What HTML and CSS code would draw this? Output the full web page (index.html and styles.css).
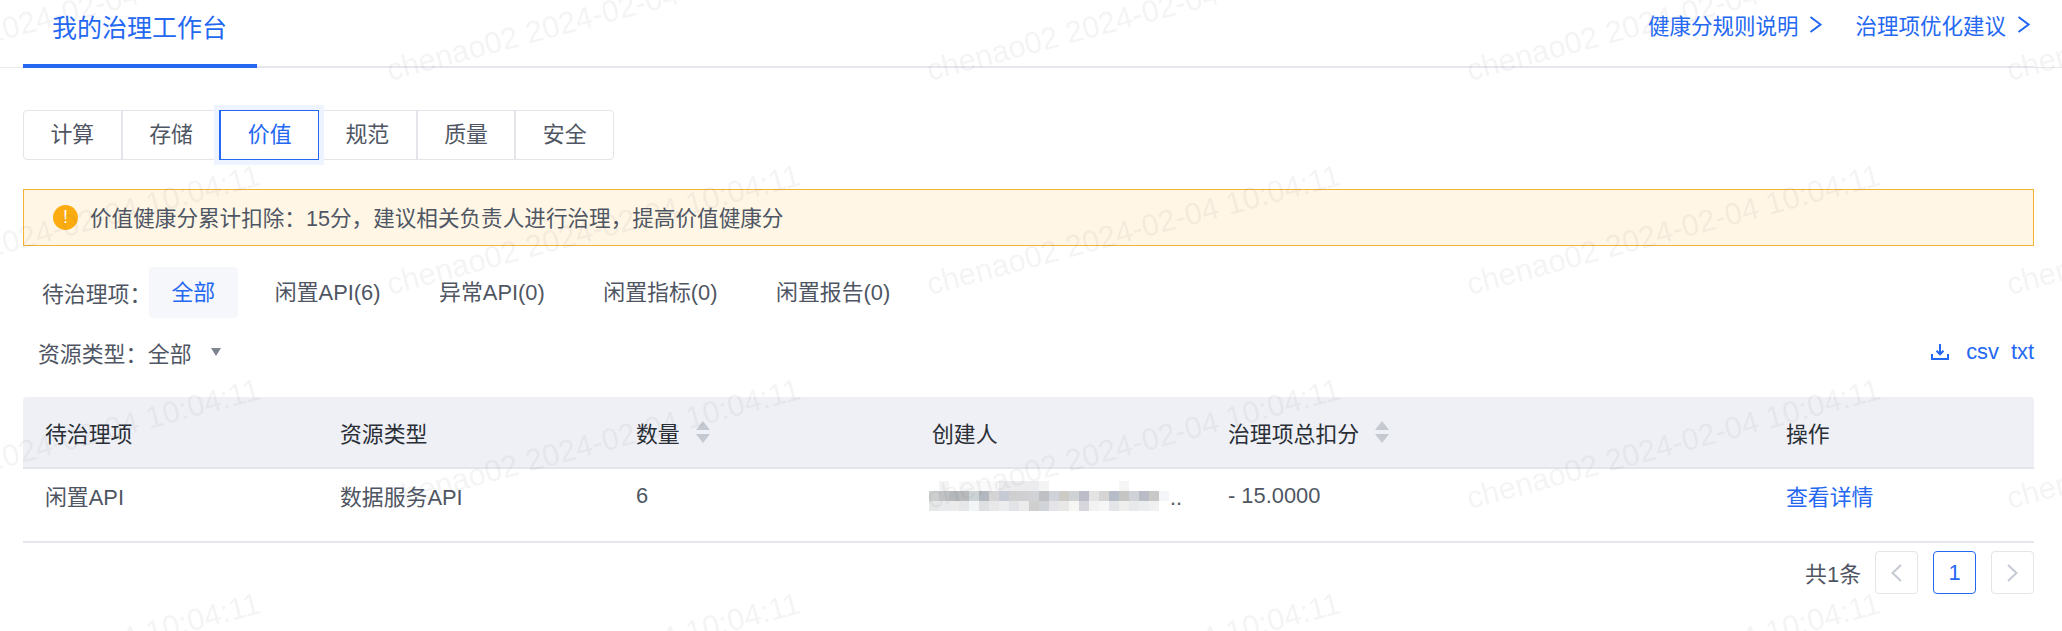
FILE: index.html
```html
<!DOCTYPE html>
<html lang="zh-CN">
<head>
  <meta charset="UTF-8">
  <title>我的治理工作台</title>
  <link rel="stylesheet" href="styles.css">
</head>
<body>
  <div class="page">
    <div class="top-bar">
      <div class="top-inner">
        <div class="title-tab">我的治理工作台</div>
        <div class="top-links">
          <a class="top-link">健康分规则说明
            <svg class="chevron" viewBox="0 0 13 17"><path d="M1.5 1 L11.5 8.5 L1.5 16"/></svg>
          </a>
          <a class="top-link">治理项优化建议
            <svg class="chevron" viewBox="0 0 13 17"><path d="M1.5 1 L11.5 8.5 L1.5 16"/></svg>
          </a>
        </div>
      </div>
    </div>

    <div class="content">
      <div class="segments">
        <div class="segment">计算</div>
        <div class="segment">存储</div>
        <div class="segment active">价值</div>
        <div class="segment">规范</div>
        <div class="segment">质量</div>
        <div class="segment">安全</div>
      </div>

      <div class="alert">
        <span class="alert-icon">!</span>
        <span class="alert-text">价值健康分累计扣除：15分，建议相关负责人进行治理，提高价值健康分</span>
      </div>

      <div class="filter-row">
        <span class="filter-label">待治理项：</span>
        <span class="filter-item active">全部</span>
        <span class="filter-item">闲置API(6)</span>
        <span class="filter-item">异常API(0)</span>
        <span class="filter-item">闲置指标(0)</span>
        <span class="filter-item">闲置报告(0)</span>
      </div>

      <div class="type-row">
        <div class="type-select">
          <span>资源类型：</span>
          <span class="type-value">全部</span>
          <span class="caret"></span>
        </div>
        <div class="downloads">
          <svg class="download-icon" viewBox="0 0 18 16"><path d="M9 0 V10 M5.5 6.8 L9 10.3 L12.5 6.8 M1 10 V15 H17 V10"/></svg>
          <a>csv</a>
          <a>txt</a>
        </div>
      </div>

      <div class="table">
        <div class="tr th">
          <div class="td c1">待治理项</div>
          <div class="td c2">资源类型</div>
          <div class="td c3">数量<span class="sorter"><i class="up"></i><i class="down"></i></span></div>
          <div class="td c4">创建人</div>
          <div class="td c5">治理项总扣分<span class="sorter"><i class="up"></i><i class="down"></i></span></div>
          <div class="td c6">操作</div>
        </div>
        <div class="tr body-row">
          <div class="td c1">闲置API</div>
          <div class="td c2">数据服务API</div>
          <div class="td c3">6</div>
          <div class="td c4"><span class="mosaic"></span><span class="dots">..</span></div>
          <div class="td c5">- 15.0000</div>
          <div class="td c6"><a>查看详情</a></div>
        </div>
      </div>

      <div class="pager">
        <span class="total">共1条</span>
        <span class="page-btn"><svg viewBox="0 0 11 18"><path d="M10 1 L1.5 9 L10 17"/></svg></span>
        <span class="page-btn current">1</span>
        <span class="page-btn"><svg viewBox="0 0 11 18"><path d="M1 1 L9.5 9 L1 17"/></svg></span>
      </div>
    </div>

    <svg class="watermark" width="2062" height="631">
      <defs>
        <pattern id="wm" width="540" height="214" patternUnits="userSpaceOnUse" patternTransform="translate(-160 -99)">
          <text x="10" y="180" transform="rotate(-15 10 180)">chenao02 2024-02-04 10:04:11</text>
        </pattern>
      </defs>
      <rect width="2062" height="631" fill="url(#wm)"/>
    </svg>
  </div>
</body>
</html>
```

FILE: styles.css
```css
* {
  box-sizing: border-box;
}

html, body {
  margin: 0;
  padding: 0;
  height: 100%;
  overflow: hidden;
  background: #fff;
}

body {
  font-family: "Liberation Sans", "Noto Sans CJK SC", sans-serif;
  font-size: 21.875px;
  color: #4f5663;
}

a {
  color: #2468f2;
}

.page {
  position: relative;
  width: 2062px;
  height: 631px;
}

/* top tab bar */
.top-bar {
  height: 68px;
  border-bottom: 1px solid #e8e9ee;
  padding: 0 28px 0 23px;
}

.top-inner {
  height: 68px;
  display: flex;
  justify-content: space-between;
  border-bottom: 2px solid #e6e7ee;
}

.title-tab {
  width: 234px;
  height: 68px;
  padding: 10px 0 0 29px;
  font-size: 25px;
  line-height: 36px;
  color: #2468f2;
  border-bottom: 4px solid #2468f2;
}

.top-links {
  display: flex;
  gap: 33px;
  padding: 7px 4px 0 0;
  font-size: 21.5px;
}

.top-link {
  display: flex;
  gap: 11px;
  align-items: center;
  height: 34px;
}

.chevron {
  width: 13px;
  height: 17px;
}

.chevron path {
  fill: none;
  stroke: #2468f2;
  stroke-width: 2;
}

.content {
  padding: 42px 28px 0 23px;
}

/* segmented buttons */
.segments {
  display: flex;
  width: 591px;
  height: 50px;
  border: 1px solid #e3e5ea;
  border-radius: 4px;
}

.segment {
  flex: 1;
  text-align: center;
  line-height: 48px;
  border-left: 2px solid #e3e5ea;
}

.segment:first-child {
  border-left: 0;
}

.segment.active {
  color: #2468f2;
  border: 1px solid #2468f2;
  border-left-width: 2px;
  margin: -1px 0;
  line-height: 48px;
  box-shadow: 0 0 0 5px #edf3ff;
  background: #fff;
  position: relative;
}

.segment.active + .segment {
  border-left: 0;
}

/* warning bar */
.alert {
  height: 57px;
  margin-top: 29px;
  display: flex;
  align-items: center;
  gap: 12px;
  padding-left: 29px;
  background: #fff6e6;
  border: 1px solid #f5b335;
}

.alert-icon {
  width: 25px;
  height: 25px;
  border-radius: 50%;
  background: #fdac0f;
  color: #fff;
  font-size: 18px;
  line-height: 25px;
  text-align: center;
}

.alert-text {
  font-size: 21.6px;
  padding-bottom: 3px;
}

/* filters */
.filter-row {
  display: flex;
  align-items: center;
  height: 51px;
  margin-top: 21px;
  padding-left: 19px;
}

.filter-label {
  width: 107px;
  white-space: nowrap;
}

.filter-item {
  height: 51px;
  line-height: 51px;
  padding: 0 22.5px;
  margin-right: 13.6px;
  border-radius: 4px;
}

.filter-item.active {
  color: #2468f2;
  background: #f6f7fa;
  margin-right: 14.6px;
}

.type-row {
  display: flex;
  justify-content: space-between;
  align-items: center;
  height: 36px;
  margin-top: 16px;
}

.type-select {
  display: flex;
  align-items: center;
  padding-left: 15px;
}

.type-value {
  margin-left: 0.5px;
}

.caret {
  width: 0;
  height: 0;
  margin-left: 19px;
  border-left: 5px solid transparent;
  border-right: 5px solid transparent;
  border-top: 8px solid #7d8490;
}

.downloads {
  display: flex;
  align-items: center;
  gap: 12px;
}

.download-icon {
  width: 18px;
  height: 16px;
  margin-right: 5px;
}

.download-icon path {
  fill: none;
  stroke: #2468f2;
  stroke-width: 2;
}

/* table */
.table {
  margin-top: 27px;
  border-bottom: 2px solid #e6e7ec;
}

.tr {
  display: flex;
  height: 72px;
  align-items: center;
}

.th {
  height: 72px;
  background: #eef0f5;
  color: #2a2e36;
  border-bottom: 2px solid #e3e5ea;
  border-radius: 4px 4px 0 0;
}

.body-row {
  padding-bottom: 19px;
}

.td {
  padding-left: 22px;
  display: flex;
  align-items: center;
}

.c1 { width: 295px; }
.c2, .c3, .c4 { width: 296px; }
.c5 { width: 558px; }
.c6 { width: 270px; }

.sorter {
  display: flex;
  flex-direction: column;
  gap: 4px;
  margin-left: 16px;
}

.sorter i {
  width: 0;
  height: 0;
  border-left: 7px solid transparent;
  border-right: 7px solid transparent;
}

.sorter .up {
  border-bottom: 9px solid #c5c9d2;
}

.sorter .down {
  border-top: 9px solid #c5c9d2;
}

/* blurred user name, one 10px block per colour */
.mosaic {
  display: block;
  width: 240px;
  height: 30px;
  margin-left: -3px;
  background:
    linear-gradient(90deg, #fff 0 10px, #f4f4f4 10px 20px, #fff 20px 30px, #fafafa 30px 70px, #ececee 70px 110px, #f4f4f4 110px 120px, #fff 120px 190px, #f6f6f6 190px 200px, #fff 200px) 0 0 / 100% 10px no-repeat,
    linear-gradient(90deg, #cdcfcf 0 10px, #c0c2c4 10px 20px, #b4b8bb 20px 30px, #b8babb 30px 40px, #ccd3d5 40px 50px, #b2b7c0 50px 60px, #d4d4d4 60px 70px, #c6cad4 70px 80px, #cfcfd0 80px 90px, #d0d0d3 90px 100px, #d1d2d5 100px 110px, #bfc0c3 110px 120px, #cfd2d8 120px 130px, #cdcbc5 130px 140px, #d0d3d4 140px 150px, #bcbdc8 150px 160px, #e4e4e4 160px 170px, #d6d5d3 170px 180px, #b6bcc8 180px 190px, #c5c6c4 190px 200px, #cfd2d6 200px 210px, #b9bcc6 210px 220px, #c8c8c6 220px 230px, #f5f6fa 230px 240px) 0 10px / 100% 10px no-repeat,
    linear-gradient(90deg, #e6e7e7 0 10px, #eaebed 10px 20px, #ebebec 20px 30px, #e6e7e8 30px 40px, #f2f5f5 40px 50px, #dfe0e2 50px 60px, #e8e8e8 60px 70px, #ebedef 70px 80px, #e2e3e6 80px 90px, #ebebeb 90px 100px, #cfcfd0 100px 110px, #d0d4d8 110px 120px, #e4e4e8 120px 130px, #e8e8e6 130px 140px, #f6f6f2 140px 150px, #d6d6dc 150px 160px, #f2f2f3 160px 170px, #f5f6f5 170px 180px, #e3e5e8 180px 190px, #eff0ee 190px 200px, #e8e9eb 200px 210px, #ecedee 210px 220px, #f0f0f0 220px 230px, #fff 230px) 0 20px / 100% 10px no-repeat;
}

.dots {
  margin-left: 1px;
  line-height: 1;
  padding-top: 4px;
}

/* pagination */
.pager {
  display: flex;
  justify-content: flex-end;
  align-items: center;
  gap: 15px;
  margin-top: 8px;
}

.total {
  margin-right: -1px;
}

.page-btn {
  display: flex;
  align-items: center;
  justify-content: center;
  width: 43px;
  height: 43px;
  border: 1px solid #e3e5ea;
  border-radius: 4px;
  color: #2468f2;
}

.page-btn svg {
  width: 11px;
  height: 18px;
}

.page-btn path {
  fill: none;
  stroke: #c5c9d2;
  stroke-width: 2;
}

.page-btn.current {
  border-color: #2468f2;
}

/* watermark over everything */
.watermark {
  position: absolute;
  left: 0;
  top: 0;
  pointer-events: none;
}

.watermark text {
  font-family: "Liberation Sans", sans-serif;
  font-size: 30.75px;
  fill: rgba(60, 60, 70, 0.055);
}
```
